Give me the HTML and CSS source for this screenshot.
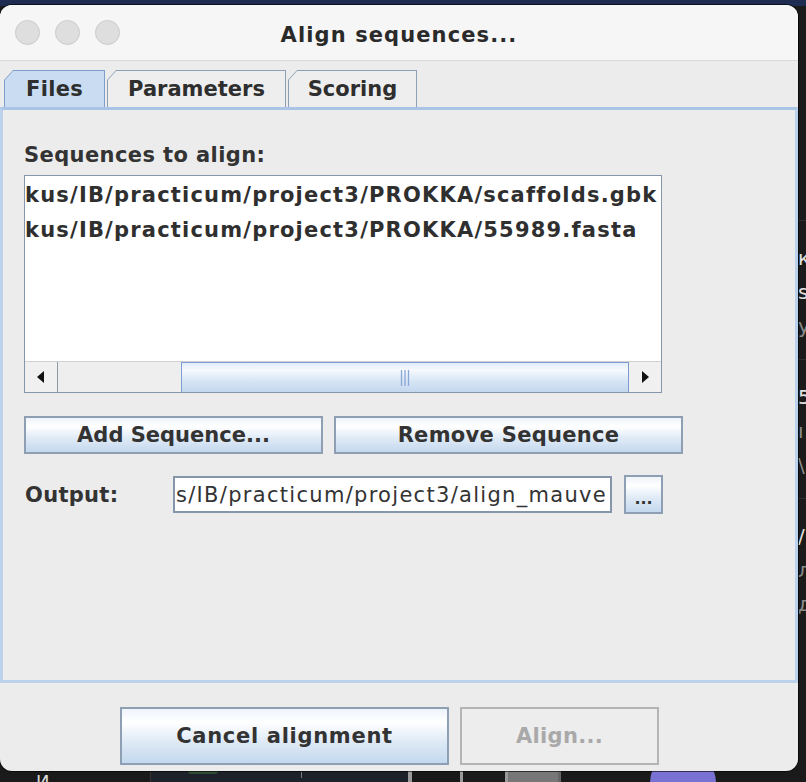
FILE: index.html
```html
<!DOCTYPE html>
<html>
<head>
<meta charset="utf-8">
<link rel="stylesheet" href="styles.css">
</head>
<body>
<div class="desktop">
  <div class="topband"></div>
  <div class="bg-right">
    <div class="bg-block"><span>к</span><span>s</span><span class="dim">y</span></div>
    <div class="bg-block"><span>5</span><span class="dim">ı</span><span class="dim">\</span></div>
    <div class="bg-block"><span>/</span><span class="dim">л</span><span class="dim">д</span></div>
  </div>
  <div class="bg-bottom">
    <div class="bb bb1"><span>И</span></div>
    <div class="bb bb2"><span class="green"></span><span class="tick"></span></div>
    <div class="bb bb3"></div>
    <div class="bb bb4"></div>
    <div class="bb bb5"></div>
    <div class="bb bb6"></div>
    <div class="avatar"></div>
  </div>

  <div class="window">
    <div class="titlebar">
      <div class="lights"><span></span><span></span><span></span></div>
      <div class="title">Align sequences...</div>
      <div></div>
    </div>
    <div class="tabs">
      <div class="tab active"><div class="tab-in">Files</div></div>
      <div class="tab params"><div class="tab-in">Parameters</div></div>
      <div class="tab scoring"><div class="tab-in">Scoring</div></div>
    </div>
    <div class="panel">
      <div class="label">Sequences to align:</div>
      <div class="listbox">
        <div class="items">
          <div class="item">kus/IB/practicum/project3/PROKKA/scaffolds.gbk</div>
          <div class="item">kus/IB/practicum/project3/PROKKA/55989.fasta</div>
        </div>
        <div class="hscroll">
          <div class="arrow arrow-left">
            <svg width="8" height="12" viewBox="0 0 8 12"><path d="M7 0 L0 6 L7 12 Z" fill="#111"/></svg>
          </div>
          <div class="track">
            <div class="thumb">
              <svg class="grip" width="10" height="16" viewBox="0 0 10 16"><path d="M1.5 0V16M5 0V16M8.5 0V16" stroke="#8aa7d8" stroke-width="1.3"/></svg>
            </div>
          </div>
          <div class="arrow arrow-right">
            <svg width="8" height="12" viewBox="0 0 8 12"><path d="M1 0 L8 6 L1 12 Z" fill="#111"/></svg>
          </div>
        </div>
      </div>
      <div class="btnrow">
        <button class="btn btn-add">Add Sequence...</button>
        <button class="btn btn-remove">Remove Sequence</button>
      </div>
      <div class="outrow">
        <div class="outlabel">Output:</div>
        <div class="field"><span>s/IB/practicum/project3/align_mauve</span></div>
        <button class="btn btn-dots">...</button>
      </div>
    </div>
    <div class="footer">
      <button class="btn btn-cancel">Cancel alignment</button>
      <button class="btn btn-align" disabled>Align...</button>
    </div>
  </div>
</div>
</body>
</html>
```

FILE: styles.css
```css
html, body {
  margin: 0;
  padding: 0;
}
body {
  width: 806px;
  height: 782px;
  overflow: hidden;
  background: #181818;
  font-family: "DejaVu Sans", "Liberation Sans", sans-serif;
  color: #2e2e2e;
}
.desktop {
  position: relative;
  width: 806px;
  height: 782px;
  background: #1b1b1b;
}
.topband {
  height: 6px;
  background: #1f2c52;
}

/* background fragments behind the window */
.bg-right {
  position: absolute;
  left: 798px;
  top: 220px;
  width: 8px;
  display: flex;
  flex-direction: column;
  background: #1b1b1b;
}
.bg-block {
  border-top: 1px solid #2e2e2e;
  height: 139px;
  padding-top: 20px;
  box-sizing: border-box;
  display: flex;
  flex-direction: column;
  font-size: 20px;
  line-height: 34px;
  color: #e2e2e2;
  overflow: hidden;
  white-space: nowrap;
}
.bg-block .dim { color: #8a8a8a; }
.bg-bottom {
  position: absolute;
  left: 0;
  top: 760px;
  width: 806px;
  height: 22px;
  display: flex;
}
.bb { height: 22px; }
.bb1 {
  width: 150px;
  background: #1a1a1a;
  color: #d8d8d8;
  font-size: 18px;
  line-height: 22px;
  padding: 12px 0 0 36px;
  box-sizing: border-box;
  overflow: hidden;
}
.bb1 span { display: block; line-height: 20px; }
.bb2 {
  width: 257px;
  background: #1d2129;
  border-left: 1px solid #333;
  position: relative;
}
.bb2 .green {
  position: absolute;
  left: 37px;
  top: 8px;
  width: 30px;
  height: 6px;
  border-radius: 3px;
  background: #2f4d33;
}
.bb2 .tick {
  position: absolute;
  left: 150px;
  top: 12px;
  width: 1px;
  height: 6px;
  background: #777;
}
.bb3 { width: 52px; background: #181818; border-left: 4px solid #9a9a9a; box-sizing: border-box; }
.bb4 { width: 48px; background: #1b1b1b; border-left: 3px solid #999; border-right: 3px solid #999; box-sizing: border-box; }
.bb5 { width: 50px; background: #777; }
.bb6 { flex: 1; background: #1a1a1a; border-left: 3px solid #666; }
.avatar {
  position: absolute;
  left: 650px;
  top: -10px;
  width: 66px;
  height: 66px;
  border-radius: 50%;
  background: #7a72d2;
}

/* window */
.window {
  position: absolute;
  left: 0;
  top: 5px;
  width: 798px;
  height: 766px;
  border-radius: 12px;
  background: #ececec;
  overflow: hidden;
  display: flex;
  flex-direction: column;
  box-shadow: 0 0 0 1px rgba(0, 0, 0, 0.6);
}
.titlebar {
  height: 55px;
  flex: none;
  background: #f6f6f6;
  border-bottom: 1px solid #d9d9d9;
  display: grid;
  grid-template-columns: 1fr auto 1fr;
  align-items: center;
}
.lights {
  display: flex;
  gap: 15px;
  padding-left: 15px;
}
.lights span {
  width: 23px;
  height: 23px;
  border-radius: 50%;
  background: #dedede;
  border: 1px solid #cbcbcb;
}
.title {
  font-weight: bold;
  font-size: 21px;
  letter-spacing: 1.1px;
  color: #2a2a2a;
  padding-bottom: 0;
  margin-top: 4px;
}

/* tabs */
.tabs {
  flex: none;
  display: flex;
  gap: 2px;
  padding: 9px 0 0 4px;
  height: 37px;
}
.tab {
  height: 37px;
  background: #8d9fb4;
  clip-path: polygon(9px 0, 100% 0, 100% 100%, 0 100%, 0 10px);
  padding: 1px 1px 0 1px;
  box-sizing: border-box;
}
.tab-in {
  height: 100%;
  background: #eeeeee;
  clip-path: polygon(8px 0, 100% 0, 100% 100%, 0 100%, 0 9px);
  font-weight: bold;
  font-size: 21px;
  letter-spacing: 0;
  line-height: 36px;
  text-align: center;
  color: #2e2e2e;
}
.tab.active { width: 101px; background: #7e9fcc; }
.tab.active .tab-in { background: #c9dcf1; letter-spacing: 0.3px; }
.tab.params { width: 179px; }
.tab.scoring { width: 129px; }

/* panel */
.panel {
  flex: none;
  height: 576px;
  box-sizing: border-box;
  border: 3px solid #bcd2ec;
  border-top: 3px solid #a9c4e6;
  background: #ececec;
  padding: 31px 0 0 21px;
  display: flex;
  flex-direction: column;
  align-items: flex-start;
}
.label {
  font-weight: bold;
  font-size: 21px;
  letter-spacing: 0.4px;
  line-height: 25px;
  padding-top: 2px;
  color: #333;
}
.listbox {
  margin-top: 7px;
  width: 638px;
  height: 218px;
  box-sizing: border-box;
  border: 1px solid #8696aa;
  background: #fff;
  display: flex;
  flex-direction: column;
}
.items {
  flex: 1;
  padding-top: 2px;
  overflow: hidden;
}
.item {
  font-weight: bold;
  font-size: 21px;
  letter-spacing: 1.2px;
  line-height: 35px;
  white-space: nowrap;
  color: #2f2f2f;
}
.hscroll {
  height: 30px;
  flex: none;
  display: flex;
  background: #eeeeee;
  border-top: 1px solid #d0d0d0;
}
.arrow {
  width: 32px;
  display: flex;
  align-items: center;
  justify-content: center;
  background: #f0f0f0;
}
.arrow-left { border-right: 1px solid #8c98a6; }
.arrow-right { border-left: 1px solid #7b9bd0; }
.track {
  flex: 1;
  display: flex;
  padding-left: 123px;
}
.thumb {
  flex: 1;
  box-sizing: border-box;
  border-top: 1px solid #7d9fd3;
  border-left: 1px solid #7d9fd3;
  background: linear-gradient(#e2ecf8 0%, #f6f9fd 25%, #d8e6f5 60%, #c3d7ee 100%);
  display: flex;
  align-items: center;
  justify-content: center;
  padding-right: 0;
}

/* buttons */
.btn {
  font-family: "DejaVu Sans", "Liberation Sans", sans-serif;
  font-weight: bold;
  font-size: 21px;
  letter-spacing: 0.3px;
  color: #333;
  border: 2px solid #8e9fb3;
  background: linear-gradient(#eef4fb 0%, #ffffff 25%, #dfeaf6 60%, #c4d8ee 100%);
  padding: 0;
  margin: 0;
  box-sizing: border-box;
}
.btnrow {
  margin-top: 23px;
  display: flex;
  gap: 11px;
}
.btn-add { width: 299px; height: 38px; letter-spacing: 0; }
.btn-remove { width: 349px; height: 38px; }
.outrow {
  margin-top: 21px;
  display: flex;
  align-items: center;
}
.outlabel {
  width: 149px;
  padding-left: 1px;
  box-sizing: border-box;
  font-weight: bold;
  font-size: 21px;
  letter-spacing: 0.3px;
  color: #333;
}
.field {
  width: 439px;
  height: 37px;
  box-sizing: border-box;
  border: 2px solid #8696aa;
  background: #fff;
  display: flex;
  justify-content: flex-end;
  align-items: center;
  overflow: hidden;
  padding-right: 3px;
}
.field span {
  font-size: 21px;
  letter-spacing: 1.3px;
  color: #333;
  white-space: nowrap;
}
.btn-dots {
  margin-left: 12px;
  width: 39px;
  height: 39px;
  font-size: 16px;
  letter-spacing: 0;
  line-height: 1;
  padding-top: 8px;
}

/* footer */
.footer {
  flex: 1;
  display: flex;
  gap: 11px;
  padding: 24px 0 0 120px;
}
.btn-cancel { width: 329px; height: 58px; letter-spacing: 0.7px; }
.btn-align {
  width: 199px;
  height: 58px;
  background: #ededed;
  border-color: #b4b4b4;
  color: #a9a9a9;
}
```
